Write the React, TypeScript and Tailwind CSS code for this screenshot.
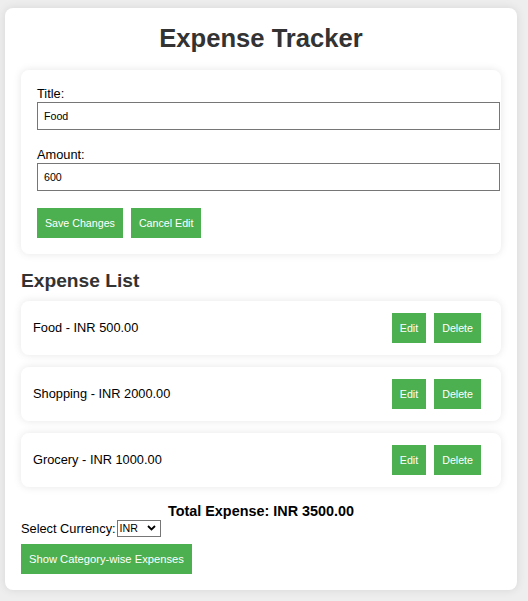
import React, { useState } from 'react';

interface Expense {
  id: number;
  title: string;
  amount: number;
}

const expenses: Expense[] = [
  { id: 1, title: 'Food', amount: 500 },
  { id: 2, title: 'Shopping', amount: 2000 },
  { id: 3, title: 'Grocery', amount: 1000 },
];

const btn = 'bg-[#4CAF50] text-white text-[10.67px] leading-[12px] h-[30px] px-2 mr-2 cursor-pointer';

const App: React.FC = () => {
  const [title, setTitle] = useState('Food');
  const [amount, setAmount] = useState('600');
  const [currency, setCurrency] = useState('INR');
  const total = expenses.reduce((s, e) => s + e.amount, 0);

  return (
    <div className="min-h-screen bg-[#eeeeee] pt-[8px] pl-[5px] pb-[10px] font-['Liberation_Sans',Arial,sans-serif] text-[12.8px] text-black">
      <div className="w-[512px] rounded-lg bg-white p-4 shadow-[0_0_10px_rgba(0,0,0,0.1)]">
        <h1 className="mb-[17px] text-center text-[25.6px] leading-[29px] font-bold text-[#333]">Expense Tracker</h1>

        <div className="rounded-lg bg-white p-4 shadow-[0_0_8px_rgba(0,0,0,0.1)]">
          <label className="block leading-[16px]">Title:</label>
          <input
            className="block w-[463px] h-[28px] border border-[#767676] px-[6px] text-[10.67px] outline-none"
            value={title}
            onChange={(e) => setTitle(e.target.value)}
          />
          <label className="block leading-[16px] mt-[17px]">Amount:</label>
          <input
            className="block w-[463px] h-[28px] border border-[#767676] px-[6px] text-[10.67px] outline-none"
            value={amount}
            onChange={(e) => setAmount(e.target.value)}
          />
          <div className="mt-[17px] flex">
            <button className={btn}>Save Changes</button>
            <button className={btn}>Cancel Edit</button>
          </div>
        </div>

        <h2 className="mt-[16px] mb-[9px] text-[19.2px] leading-[22px] font-bold text-[#333]">Expense List</h2>

        <div className="flex flex-col gap-3">
          {expenses.map((e) => (
            <div
              key={e.id}
              className="flex h-[54px] items-center justify-between rounded-lg bg-white pl-3 pr-3 shadow-[0_0_8px_rgba(0,0,0,0.1)]"
            >
              <span>
                {e.title} - {currency} {e.amount.toFixed(2)}
              </span>
              <div className="flex">
                <button className={btn}>Edit</button>
                <button className={btn}>Delete</button>
              </div>
            </div>
          ))}
        </div>

        <p className="mt-[16px] text-center text-[14.4px] leading-[17px] font-bold">
          Total Expense: {currency} {total.toFixed(2)}
        </p>

        <div className="flex items-center leading-[15px]">
          <span>Select Currency:</span>
          <div className="relative ml-px">
            <select
              className="block h-[17px] w-[44px] appearance-none border border-[#767676] bg-white pl-[2px] text-[10.67px] leading-[13px] outline-none"
              value={currency}
              onChange={(e) => setCurrency(e.target.value)}
            >
              <option>INR</option>
              <option>USD</option>
              <option>EUR</option>
            </select>
            <svg className="pointer-events-none absolute right-[5px] top-[5px]" width="9" height="6" viewBox="0 0 9 6">
              <path d="M1 1l3.5 3.5L8 1" fill="none" stroke="#000" strokeWidth="1.8" />
            </svg>
          </div>
        </div>

        <button className="mt-[7px] h-[30px] bg-[#4CAF50] px-2 text-[11.2px] text-white">Show Category-wise Expenses</button>
      </div>
    </div>
  );
};

export default App;
